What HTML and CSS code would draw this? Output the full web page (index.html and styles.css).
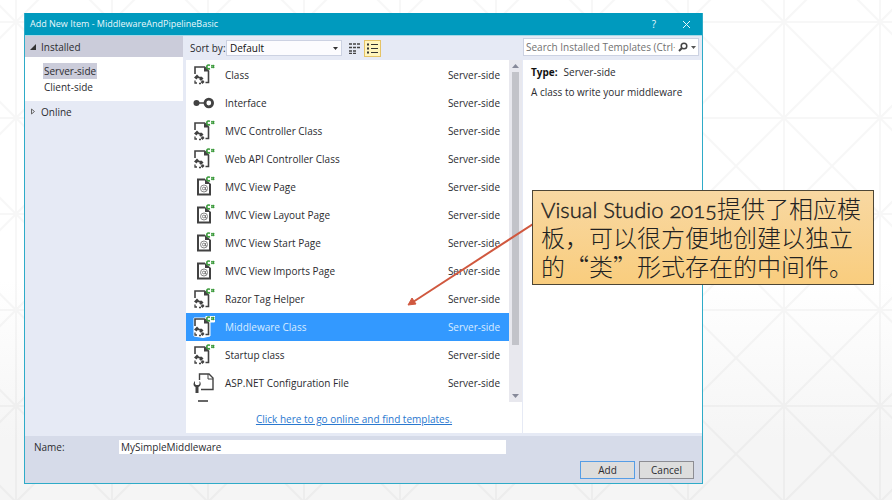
FILE: index.html
```html
<!DOCTYPE html>
<html lang="en">
<head>
<meta charset="utf-8">
<title>Add New Item</title>
<link rel="stylesheet" href="styles.css">
</head>
<body>
<svg class="backdrop" aria-hidden="true">
  <defs>
    <pattern id="lattice" x="16" y="22" width="96" height="96" patternUnits="userSpaceOnUse">
      <path d="M0 0H96M0 0V96M0 96H96M96 0V96M0 0L96 96M96 0L0 96" fill="none" stroke="#000" stroke-opacity=".03" stroke-width="2"/>
    </pattern>
  </defs>
  <rect width="100%" height="100%" fill="url(#lattice)"/>
</svg>

<svg class="sprites" aria-hidden="true">
  <symbol id="i-class" viewBox="0 0 22 22">
    <path d="M2 10V3H11.500L15.500 7V18.500H12.500" fill="none" stroke="currentColor" stroke-width="1.600"/>
    <path d="M11 3V7.500H16Z" fill="currentColor"/>
    <path d="M1 13.500L4 10.500L6 12.500L3.500 15.500ZM6 15L8.500 12.500L10.500 14.500L8 17ZM7.500 18L10 16L11.500 18L9.500 20Z" fill="currentColor"/>
    <path d="M5 13.500H8M2 16.500V19H4M6 19.500H8" fill="none" stroke="currentColor" stroke-width="1.300"/>
  </symbol>
  <symbol id="i-cs" viewBox="0 0 22 22">
    <path d="M17 1.200Q13.800 .4 13.800 2.900Q13.800 5.400 17 4.600" fill="none" stroke="#3c9a3c" stroke-width="1.700"/>
    <path d="M19 .8V4.200M20.500 .8V4.200M18 1.700H21.500M18 3.300H21.500" stroke="#3c9a3c" stroke-width="1"/>
  </symbol>
  <symbol id="i-view" viewBox="0 0 22 22">
    <path d="M12 3.500H5V18.500H17V8" fill="none" stroke="currentColor" stroke-width="2"/>
    <path d="M12 3L18 8H12Z" fill="currentColor"/>
    <circle cx="11" cy="12.500" r="3.500" fill="none" stroke="#777" stroke-width=".9"/>
    <circle cx="10.800" cy="12.500" r="1.400" fill="none" stroke="#777" stroke-width=".9"/>
    <path d="M12.500 11V14H14" fill="none" stroke="#777" stroke-width=".9"/>
  </symbol>
  <symbol id="i-interface" viewBox="0 0 22 22">
    <circle cx="3.500" cy="11" r="3" fill="currentColor"/>
    <path d="M6 11H12" stroke="currentColor" stroke-width="1.500"/>
    <circle cx="15.800" cy="11" r="3.800" fill="none" stroke="currentColor" stroke-width="2.800"/>
  </symbol>
  <symbol id="i-config" viewBox="0 0 22 22">
    <path d="M6.500 8V2H16L20 6V17.500H8" fill="none" stroke="currentColor" stroke-width="1.400"/>
    <path d="M15 2V7H20" fill="none" stroke="currentColor" stroke-width="1"/>
    <path d="M2 9C0 11 0 14 2.500 15V21H5.500V15C8 14 8.500 11 6.500 9V12L5.500 13H3L2 12Z" fill="currentColor"/>
  </symbol>
  <symbol id="i-partial" viewBox="0 0 22 22">
    <path d="M5 4H15" stroke="currentColor" stroke-width="1.600"/>
  </symbol>
</svg>

<main class="stage">
  <section class="dialog">
    <header class="titlebar">
      <h1>Add New Item - MiddlewareAndPipelineBasic</h1>
      <button class="caption" aria-label="Help">?</button>
      <button class="caption" aria-label="Close"><svg width="9" height="9" viewBox="0 0 9 9"><path d="M1 1L8 8M8 1L1 8" stroke="currentColor" fill="none"/></svg></button>
    </header>

    <div class="body">
      <nav class="sidebar">
        <button class="group open"><svg width="6" height="6" viewBox="0 0 6 6"><path d="M6 0V6H0Z" fill="#333"/></svg>Installed</button>
        <div class="branch">
          <button class="leaf current">Server-side</button>
          <button class="leaf">Client-side</button>
        </div>
        <button class="group"><svg width="6" height="7" viewBox="0 0 6 7"><path d="M1.500 1L4.500 3.500L1.500 6Z" fill="none" stroke="#666"/></svg>Online</button>
      </nav>

      <div class="center">
        <div class="toolbar">
          <label for="sort">Sort by:</label>
          <span class="select">
            <select id="sort"><option>Default</option></select>
            <svg width="5" height="3" viewBox="0 0 5 3"><path d="M0 0H5L2.500 3Z" fill="#333"/></svg>
          </span>
          <button class="view" aria-label="Small icons"><svg width="11" height="11" viewBox="0 0 11 11"><path d="M0 1H11M0 4.500H11M0 8H7M0 10.500H7" stroke="#444" stroke-width="1.600" stroke-dasharray="3 1"/></svg></button>
          <button class="view active" aria-label="Medium icons"><svg width="11" height="11" viewBox="0 0 11 11"><path d="M0 1.500H2M0 5.500H2M0 9.500H2" stroke="#333" stroke-width="2"/><path d="M4 1.500H11M4 5.500H11M4 9.500H11" stroke="#333"/></svg></button>
        </div>
        <div class="results">
          <div class="viewport">
            <ul class="list">
              <li><button class="row"><svg class="icon"><use href="#i-class"/><use href="#i-cs"/></svg><span>Class</span><span class="kind">Server-side</span></button></li>
              <li><button class="row"><svg class="icon"><use href="#i-interface"/></svg><span>Interface</span><span class="kind">Server-side</span></button></li>
              <li><button class="row"><svg class="icon"><use href="#i-class"/><use href="#i-cs"/></svg><span>MVC Controller Class</span><span class="kind">Server-side</span></button></li>
              <li><button class="row"><svg class="icon"><use href="#i-class"/><use href="#i-cs"/></svg><span>Web API Controller Class</span><span class="kind">Server-side</span></button></li>
              <li><button class="row"><svg class="icon"><use href="#i-view"/><use href="#i-cs"/></svg><span>MVC View Page</span><span class="kind">Server-side</span></button></li>
              <li><button class="row"><svg class="icon"><use href="#i-view"/><use href="#i-cs"/></svg><span>MVC View Layout Page</span><span class="kind">Server-side</span></button></li>
              <li><button class="row"><svg class="icon"><use href="#i-view"/><use href="#i-cs"/></svg><span>MVC View Start Page</span><span class="kind">Server-side</span></button></li>
              <li><button class="row"><svg class="icon"><use href="#i-view"/><use href="#i-cs"/></svg><span>MVC View Imports Page</span><span class="kind">Server-side</span></button></li>
              <li><button class="row"><svg class="icon"><use href="#i-class"/><use href="#i-cs"/></svg><span>Razor Tag Helper</span><span class="kind">Server-side</span></button></li>
              <li><button class="row selected"><svg class="icon"><path d="M1 2H13V0H21.500V6H17V20L10 21.500L1 20Z" fill="#fff" stroke="#fff" stroke-linejoin="round"/><use href="#i-class"/><use href="#i-cs"/></svg><span>Middleware Class</span><span class="kind">Server-side</span></button></li>
              <li><button class="row"><svg class="icon"><use href="#i-class"/><use href="#i-cs"/></svg><span>Startup class</span><span class="kind">Server-side</span></button></li>
              <li><button class="row"><svg class="icon"><use href="#i-config"/></svg><span>ASP.NET Configuration File</span><span class="kind">Server-side</span></button></li>
            </ul>
            <svg class="icon cut"><use href="#i-partial"/></svg>
            <div class="scrollbar">
              <svg width="7" height="4" viewBox="0 0 7 4"><path d="M0 4H7L3.500 0Z" fill="#868999"/></svg>
              <div class="thumb"></div>
              <svg width="7" height="4" viewBox="0 0 7 4"><path d="M0 0H7L3.500 4Z" fill="#868999"/></svg>
            </div>
          </div>
          <p class="online"><a href="#">Click here to go online and find templates.</a></p>
        </div>
      </div>

      <aside class="side">
        <div class="search">
          <input type="text" aria-label="Search Installed Templates" placeholder="Search Installed Templates (Ctrl+E)">
          <svg width="10" height="10" viewBox="0 0 10 10"><circle cx="6" cy="4" r="2.800" fill="none" stroke="#444" stroke-width="1.500"/><path d="M4 6L1 9" stroke="#444" stroke-width="2"/></svg>
          <svg width="5" height="3" viewBox="0 0 5 3"><path d="M0 0H5L2.500 3Z" fill="#555"/></svg>
        </div>
        <div class="details">
          <p><b>Type:</b>Server-side</p>
          <p>A class to write your middleware</p>
        </div>
      </aside>
    </div>

    <footer class="footer">
      <div class="name">
        <label for="name">Name:</label>
        <input id="name" type="text" value="MySimpleMiddleware">
      </div>
      <div class="actions">
        <button class="btn primary">Add</button>
        <button class="btn">Cancel</button>
      </div>
    </footer>

    <div class="note">
      <svg class="arrow" width="126" height="84" viewBox="0 0 126 84" aria-hidden="true"><path d="M126 1L6 79" stroke="#d0583f" stroke-width="2"/><path d="M1 82L5 75L9 81Z" fill="#d0583f" stroke="#d0583f"/></svg>
      <p class="callout" lang="zh-CN"><span class="latin">Visual Studio 2015</span>提供了相应模<br>板，可以很方便地创建以独立<br>的“类”形式存在的中间件。</p>
    </div>
  </section>
</main>
</body>
</html>
```
FILE: styles.css
```css
* { box-sizing: border-box; }

body {
  margin: 0;
  min-height: 100vh;
  background: linear-gradient(#fff 0 56%, #f5f5f5 88%);
  color: #2b2b2f;
  font: 10px/16px "Open Sans", "Noto Sans", sans-serif;
}

h1, p, ul { margin: 0; padding: 0; font: inherit; }
ul { list-style: none; }

button, input, select {
  margin: 0;
  padding: 0;
  border: 0;
  background: none;
  color: inherit;
  font: inherit;
}

svg { display: block; flex: none; }

.backdrop { position: absolute; inset: 0; width: 100%; height: 100%; z-index: -1; }
.sprites { position: absolute; width: 0; height: 0; }

.stage { padding: 13px 189px 0 24px; }

.dialog {
  position: relative;
  border: 1px solid #2eabc8;
  border-top: 0;
  background: #e6eaf5;
}

.titlebar {
  display: flex;
  align-items: center;
  height: 22px;
  padding-left: 5px;
  background: #009abe;
  color: #e9f8fc;
}
.titlebar h1 { flex: 1; font-size: 9px; }
.caption { display: grid; place-items: center; width: 32px; height: 22px; }

.body {
  display: grid;
  grid-template-columns: 158px 1fr 179px;
  border-top: 1px solid #a6d8e6;
  padding-bottom: 3px;
}

.group {
  display: flex;
  align-items: center;
  gap: 5px;
  width: 100%;
  height: 21px;
  padding-left: 5px;
}
.group.open { background: #cbccda; }
.branch {
  display: flex;
  flex-direction: column;
  align-items: flex-start;
  padding: 6px 0 6px 18px;
  background: #fff;
}
.leaf { height: 16px; padding: 0 1px; }
.leaf.current { background: #cbccda; }

.center { display: flex; flex-direction: column; margin-left: 3px; }

.toolbar { display: flex; align-items: center; height: 24px; padding-left: 4px; }
.toolbar label { width: 36px; }
.select {
  display: flex;
  align-items: center;
  width: 116px;
  height: 16px;
  padding-right: 3px;
  border: 1px solid #ccd2e2;
  background: #fcfcfe;
}
.select select { flex: 1; height: 14px; padding-left: 3px; appearance: none; line-height: 14px; color: #111; }
.view { display: grid; place-items: center; width: 17px; height: 17px; margin-left: 4px; }
.view.active { margin-left: 1px; border: 1px solid #e5c365; background: #fff5bd; }

.results { flex: 1; background: #fff; border-right: 1px solid #e6eaf5; }
.viewport {
  display: grid;
  grid-template-columns: 1fr 13px;
  grid-template-rows: auto 5px;
  overflow: hidden;
}
.list { padding-top: 1px; }
.row {
  display: flex;
  align-items: center;
  gap: 10px;
  width: 100%;
  height: 28px;
  padding: 0 9px 0 7px;
}
.row.selected { background: #3399ff; color: #d9ecff; }
.icon { width: 22px; height: 22px; color: #424242; }
.icon.cut { grid-row: 2; margin-left: 7px; }
.kind { margin-left: auto; }

.scrollbar {
  display: flex;
  flex-direction: column;
  align-items: center;
  grid-column: 2;
  grid-row: 1 / 3;
  gap: 4px;
  padding: 4px 0;
  background: #e8e8ee;
}
.thumb { width: 7px; height: 273px; margin-bottom: auto; background: #c2c3c9; }

.online { padding: 9px 0 6px; text-align: center; }
.online a { color: #2a78cf; }

.side { display: flex; flex-direction: column; }
.search {
  display: flex;
  align-items: center;
  gap: 3px;
  height: 18px;
  margin: 2px 3px 4px 0;
  padding: 0 2px;
  border: 1px solid #ccd2e2;
  background: #fff;
}
.search input { flex: 1; min-width: 0; height: 16px; }
.search input::placeholder { color: #717171; opacity: 1; }
.details { flex: 1; display: grid; align-content: start; gap: 4px; padding: 4px 8px; background: #fff; }
.details b { margin-right: 6px; color: #111; }

.footer { padding: 4px 8px 4px 9px; background: #d6dbe9; }
.name { display: flex; align-items: center; height: 14px; }
.name label { width: 85px; }
.name input { width: 387px; height: 14px; padding-left: 2px; background: #fff; }
.actions { display: flex; justify-content: flex-end; gap: 4px; margin-top: 7px; }
.btn { width: 55px; height: 18px; border: 1px solid #8d8d93; background: #ddd; line-height: 16px; }
.btn.primary { border-color: #569de5; }

.note { position: absolute; top: 177px; left: 382px; display: flex; align-items: flex-start; }
.arrow { margin-top: 33px; margin-right: -1px; }
.callout {
  padding: 2px 12px 4px 8px;
  border: 1px solid #4d4636;
  background: linear-gradient(#f8d8a2, #f9cd7e);
  color: #222;
  font: 24px/29px "Noto Sans CJK SC", sans-serif;
  font-weight: 300;
  white-space: nowrap;
}
.latin {
  font-family: Lato, sans-serif;
  font-size: 22px;
  line-height: 1;
  font-variant-numeric: oldstyle-nums;
  -webkit-text-stroke: 0.4px currentColor;
}
```
